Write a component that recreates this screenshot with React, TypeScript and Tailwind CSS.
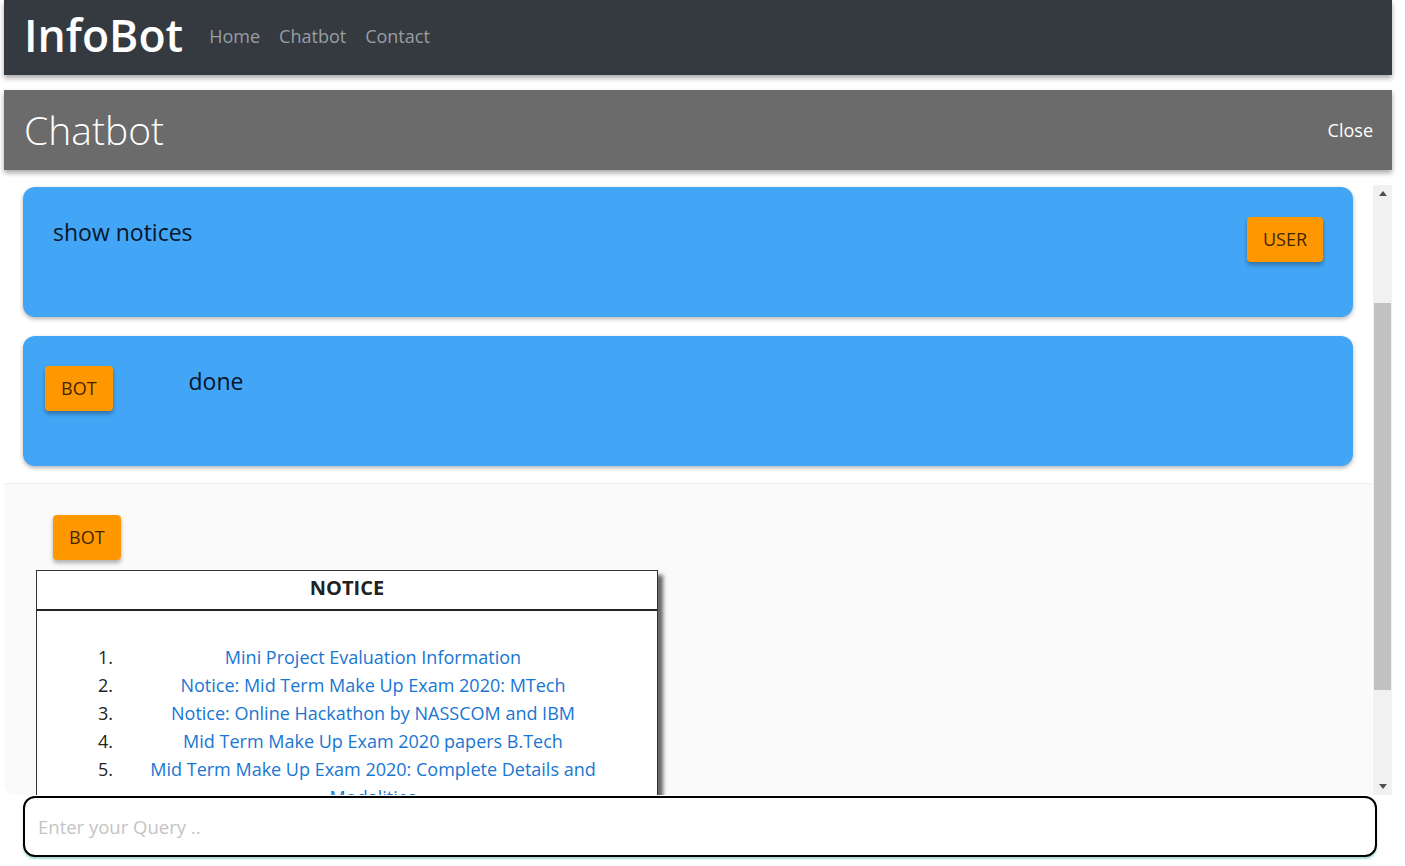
import React, {useEffect, useRef} from "react";

const notices = [
    "Mini Project Evaluation Information",
    "Notice: Mid Term Make Up Exam 2020: MTech",
    "Notice: Online Hackathon by NASSCOM and IBM",
    "Mid Term Make Up Exam 2020 papers B.Tech",
    "Mid Term Make Up Exam 2020: Complete Details and Modalities",
    "Notice: Online Classes for Even Semester 2020",
    "Revised Academic Calendar Even Semester",
    "Scholarship Notice for Session 2019-20",
];

const Tag = ({label, className = ""}: { label: string; className?: string }) => (
    <button
        className={"h-[45px] shrink-0 rounded-[4px] bg-[#ff9800] px-4 text-[18px] uppercase text-[#2a1600]/90 shadow-[0_3px_4px_rgba(0,0,0,0.3)] " + className}>
        {label}
    </button>
);

const NoticeTable = () => (
    <div className="w-[622px] border border-[#333] bg-white shadow-[5px_5px_4px_rgba(0,0,0,0.6)]">
        <div className="flex h-[40px] items-center justify-center border-b-2 border-[#222] pb-[4px] text-[20px] font-bold text-[#222]">
            NOTICE
        </div>
        <ol className="pt-[32px] pb-6">
            {notices.map((n, i) => (
                <li key={n} className="flex text-[18px] leading-[28px]">
                    <span className="w-[76px] shrink-0 text-right text-[#222]">{i + 1}.</span>
                    <a href="#" className="ml-[10px] w-[500px] text-center text-[#1976d2]">{n}</a>
                </li>
            ))}
        </ol>
    </div>
);

const Arrow = ({up}: { up?: boolean }) => (
    <div className="flex h-[17px] items-center justify-center">
        <svg width="8" height="5" viewBox="0 0 8 5">
            <path d={up ? "M0 5L4 0L8 5Z" : "M0 0L4 5L8 0Z"} fill="#505050"/>
        </svg>
    </div>
);

const App = () => {
    const scroller = useRef<HTMLDivElement>(null);

    useEffect(() => {
        if (scroller.current) scroller.current.scrollTop = 153;
    }, []);

    return (
        <div className="min-h-screen bg-white font-['Open_Sans','Noto_Sans',sans-serif]">
            <nav className="ml-1 mr-[13px] flex h-[75px] items-center bg-[#343a40] px-5 pb-[5px] shadow-[0_3px_5px_rgba(0,0,0,0.35)]">
                <span className="text-[44.5px] font-semibold leading-none text-white">InfoBot</span>
                <div className="ml-[26px] mt-[2px] flex gap-[19px] text-[18px] text-[#9a9da0]">
                    <a href="#">Home</a>
                    <a href="#">Chatbot</a>
                    <a href="#">Contact</a>
                </div>
            </nav>

            <div className="ml-1 mr-[13px]">
                <header className="mt-[15px] flex h-20 items-center justify-between bg-[#6b6b6b] pl-5 pr-[19px] shadow-[0_3px_5px_rgba(0,0,0,0.35)]">
                    <h1 className="text-[39px] font-light text-white">Chatbot</h1>
                    <button className="text-[18px] text-white">Close</button>
                </header>

                <div className="mt-[15px] flex h-[610px]">
                    <div ref={scroller} className="flex-1 overflow-hidden rounded-bl-xl bg-white">
                        <div className="pt-[6px]">
                            <div className="mx-[19px] mb-[19px] flex h-[130px] items-start rounded-xl bg-[#42a5f5] py-[30px] pl-[22px] shadow-[0_2px_4px_rgba(0,0,0,0.3)]">
                                <Tag label="Bot"/>
                                <p className="ml-[76px] text-[23px] font-medium leading-[30px] text-[#08152a]">Hi! How can I help you?</p>
                            </div>

                            <div className="mx-[19px] mb-[19px] flex h-[130px] items-start justify-between rounded-xl bg-[#42a5f5] px-[30px] py-[30px] shadow-[0_2px_4px_rgba(0,0,0,0.3)]">
                                <p className="text-[23px] font-medium leading-[30px] text-[#08152a]">show notices</p>
                                <Tag label="User"/>
                            </div>

                            <div className="mx-[19px] mb-[17px] flex h-[130px] items-start rounded-xl bg-[#42a5f5] py-[30px] pl-[22px] shadow-[0_2px_4px_rgba(0,0,0,0.3)]">
                                <Tag label="Bot"/>
                                <p className="ml-[76px] text-[23px] font-medium leading-[30px] text-[#08152a]">done</p>
                            </div>

                            <div className="border-t border-[#eeeeee] bg-[#fafafa] pt-[31px] pl-8 pb-6">
                                <Tag label="Bot" className="ml-[17px]"/>
                                <div className="mt-[10px]">
                                    <NoticeTable/>
                                </div>
                            </div>
                        </div>
                    </div>

                    <div className="flex w-[20px] flex-col border-l border-white bg-[#f1f1f1]">
                        <Arrow up/>
                        <div className="flex-1 px-px">
                            <div className="mt-[101px] h-[387px] bg-[#c1c1c1]"/>
                        </div>
                        <Arrow/>
                    </div>
                </div>

                <div className="mt-px pl-[19px] pr-[15px]">
                    <input
                        autoFocus
                        placeholder="Enter your Query .."
                        className="h-[61px] w-full rounded-xl border-2 border-black bg-white px-[13px] text-[18.5px] outline-none placeholder:text-[#c4c4c4] shadow-[0_2px_2px_rgba(0,150,136,0.35)]"/>
                </div>
            </div>
        </div>
    );
};

export default App;
